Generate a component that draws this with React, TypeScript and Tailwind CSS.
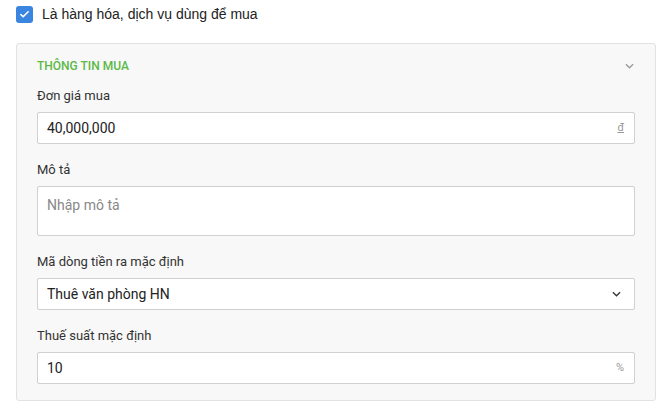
import { Check } from 'lucide-react';

function Chevron({ className }: { className?: string }) {
  return (
    <svg viewBox="0 0 10 6" className={className} fill="none" stroke="currentColor" strokeWidth="1.4">
      <path d="M1 1l4 4 4-4" />
    </svg>
  );
}

function Label({ children }: { children: React.ReactNode }) {
  return <div className="mb-[6px] text-[13px] leading-5 text-[#333]">{children}</div>;
}

export default function App() {
  return (
    <div className="h-[410px] w-[670px] bg-white font-['Roboto',sans-serif]">
      {/* Checkbox row */}
      <div className="flex h-[17px] items-center gap-[9px] pl-4 mt-[6px]">
        <span className="flex h-[17px] w-[17px] items-center justify-center rounded-[3px] bg-[#3a85e0]">
          <Check className="h-[11px] w-[11px] text-white" strokeWidth={3.5} />
        </span>
        <span className="font-['Liberation_Sans',Arial,sans-serif] text-[14px] text-[#222]">
          Là hàng hóa, dịch vụ dùng để mua
        </span>
      </div>

      {/* Panel */}
      <div className="ml-4 mt-5 w-[640px] rounded-[3px] border border-[#e2e2e2] bg-[#f8f8f8] px-5 pb-4 pt-3">
        <div className="mb-[10px] flex items-center justify-between pr-[3px]">
          <span className="text-[12px] font-medium leading-5 text-[#5bb947]">THÔNG TIN MUA</span>
          <Chevron className="mr-[-2px] h-[6px] w-[9px] text-[#999]" />
        </div>

        <div className="flex flex-col gap-4">
          <div>
            <Label>Đơn giá mua</Label>
            <div className="flex h-[32px] items-center justify-between rounded-[2px] border border-[#d0d0d0] bg-white pl-[9px] pr-[10px]">
              <span className="text-[14px] text-[#222]">40,000,000</span>
              <span className="text-[11px] text-[#999] underline">đ</span>
            </div>
          </div>

          <div>
            <Label>Mô tả</Label>
            <div className="h-[50px] rounded-[2px] border border-[#d0d0d0] bg-white pl-[9px] pt-[6px]">
              <span className="text-[14px] text-[#888]">Nhập mô tả</span>
            </div>
          </div>

          <div>
            <Label>Mã dòng tiền ra mặc định</Label>
            <div className="flex h-[32px] items-center justify-between rounded-[2px] border border-[#d0d0d0] bg-white pl-[9px] pr-[13px]">
              <span className="text-[14px] text-[#222]">Thuê văn phòng HN</span>
              <Chevron className="h-[6px] w-[9px] text-[#333]" />
            </div>
          </div>

          <div>
            <Label>Thuế suất mặc định</Label>
            <div className="flex h-[32px] items-center justify-between rounded-[2px] border border-[#d0d0d0] bg-white pl-[9px] pr-[10px]">
              <span className="text-[14px] text-[#222]">10</span>
              <span className="text-[11px] text-[#999]">%</span>
            </div>
          </div>
        </div>
      </div>
    </div>
  );
}
